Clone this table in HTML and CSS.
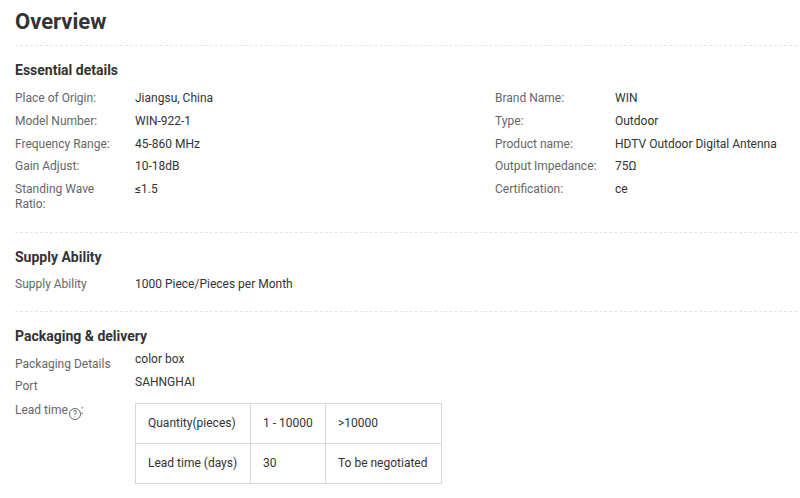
FILE: index.html
```html
<!DOCTYPE html>
<html>
<head>
<meta charset="utf-8">
<link rel="stylesheet" href="styles.css">
</head>
<body>
<div class="page">
  <h1 class="title">Overview</h1>
  <section class="section">
    <h2 class="sec-title">Essential details</h2>
    <div class="grid">
      <div class="col">
        <div class="row"><div class="lbl">Place of Origin:</div><div class="val">Jiangsu, China</div></div>
        <div class="row"><div class="lbl">Model Number:</div><div class="val">WIN-922-1</div></div>
        <div class="row"><div class="lbl">Frequency Range:</div><div class="val">45-860 MHz</div></div>
        <div class="row"><div class="lbl">Gain Adjust:</div><div class="val">10-18dB</div></div>
        <div class="row"><div class="lbl">Standing Wave Ratio:</div><div class="val">≤1.5</div></div>
      </div>
      <div class="col">
        <div class="row"><div class="lbl">Brand Name:</div><div class="val">WIN</div></div>
        <div class="row"><div class="lbl">Type:</div><div class="val">Outdoor</div></div>
        <div class="row"><div class="lbl">Product name:</div><div class="val">HDTV Outdoor Digital Antenna</div></div>
        <div class="row"><div class="lbl">Output Impedance:</div><div class="val">75Ω</div></div>
        <div class="row"><div class="lbl">Certification:</div><div class="val">ce</div></div>
      </div>
    </div>
  </section>
  <section class="section">
    <h2 class="sec-title tight">Supply Ability</h2>
    <div class="row"><div class="lbl">Supply Ability</div><div class="val">1000 Piece/Pieces per Month</div></div>
  </section>
  <section class="section last">
    <h2 class="sec-title">Packaging &amp; delivery</h2>
    <div class="row pk"><div class="lbl">Packaging Details</div><div class="val up5">color box</div></div>
    <div class="row pk"><div class="lbl">Port</div><div class="val up4">SAHNGHAI</div></div>
    <div class="row lead">
      <div class="lbl">Lead time<span class="q">?</span>:</div>
      <table class="lt">
        <tr><td class="c1">Quantity(pieces)</td><td class="c2">1 - 10000</td><td class="c3">&gt;10000</td></tr>
        <tr><td class="c1">Lead time (days)</td><td class="c2">30</td><td class="c3">To be negotiated</td></tr>
      </table>
    </div>
  </section>
</div>
</body>
</html>
```
FILE: styles.css
```css
* { box-sizing: border-box; }
body {
  margin: 0;
  background: #fff;
  font-family: Roboto, "Liberation Sans", Arial, sans-serif;
  font-size: 12px;
  color: #333;
}
.page {
  padding: 0 3px 0 15px;
}
.title {
  margin: 0;
  height: 46px;
  padding-top: 8px;
  font-size: 22px;
  line-height: 28px;
  font-weight: 700;
  color: #333;
  border-bottom: 1px dashed #e5e5e5;
}
.section {
  border-bottom: 1px dashed #e5e5e5;
  padding: 15px 0 16px;
}
.section.last { border-bottom: none; }
.sec-title {
  margin: 0 0 8px;
  font-size: 14px;
  line-height: 18px;
  font-weight: 700;
  color: #333;
}
.sec-title.tight { margin-bottom: 7px; }
.grid {
  display: grid;
  grid-template-columns: 480px 1fr;
}
.row {
  display: flex;
  line-height: 14.75px;
  padding: 4px 0;
}
.lbl {
  width: 120px;
  flex: none;
  color: #666;
  padding-right: 14px;
}
.val { color: #333; }
.pk { padding: 4px 0 3px; line-height: 15px; }
.val.up5 { margin-top: -5px; }
.val.up4 { margin-top: -4px; }
.q {
  display: inline-block;
  width: 12px;
  height: 12px;
  border: 1px solid #666;
  border-radius: 50%;
  font-size: 9px;
  line-height: 10px;
  text-align: center;
  vertical-align: -3px;
  margin-left: 1px;
}
.lead { padding: 0; line-height: 15px; }
.lead .lbl { padding-top: 6px; }
.lt {
  border-collapse: collapse;
  margin-top: 6px;
}
.lt td {
  border: 1px solid #d4d8e0;
  height: 40px;
  padding: 0 12px;
  color: #333;
  white-space: nowrap;
}
.lt .c1 { width: 115px; }
.lt .c2 { width: 75px; }
.lt .c3 { width: 116px; }
```
